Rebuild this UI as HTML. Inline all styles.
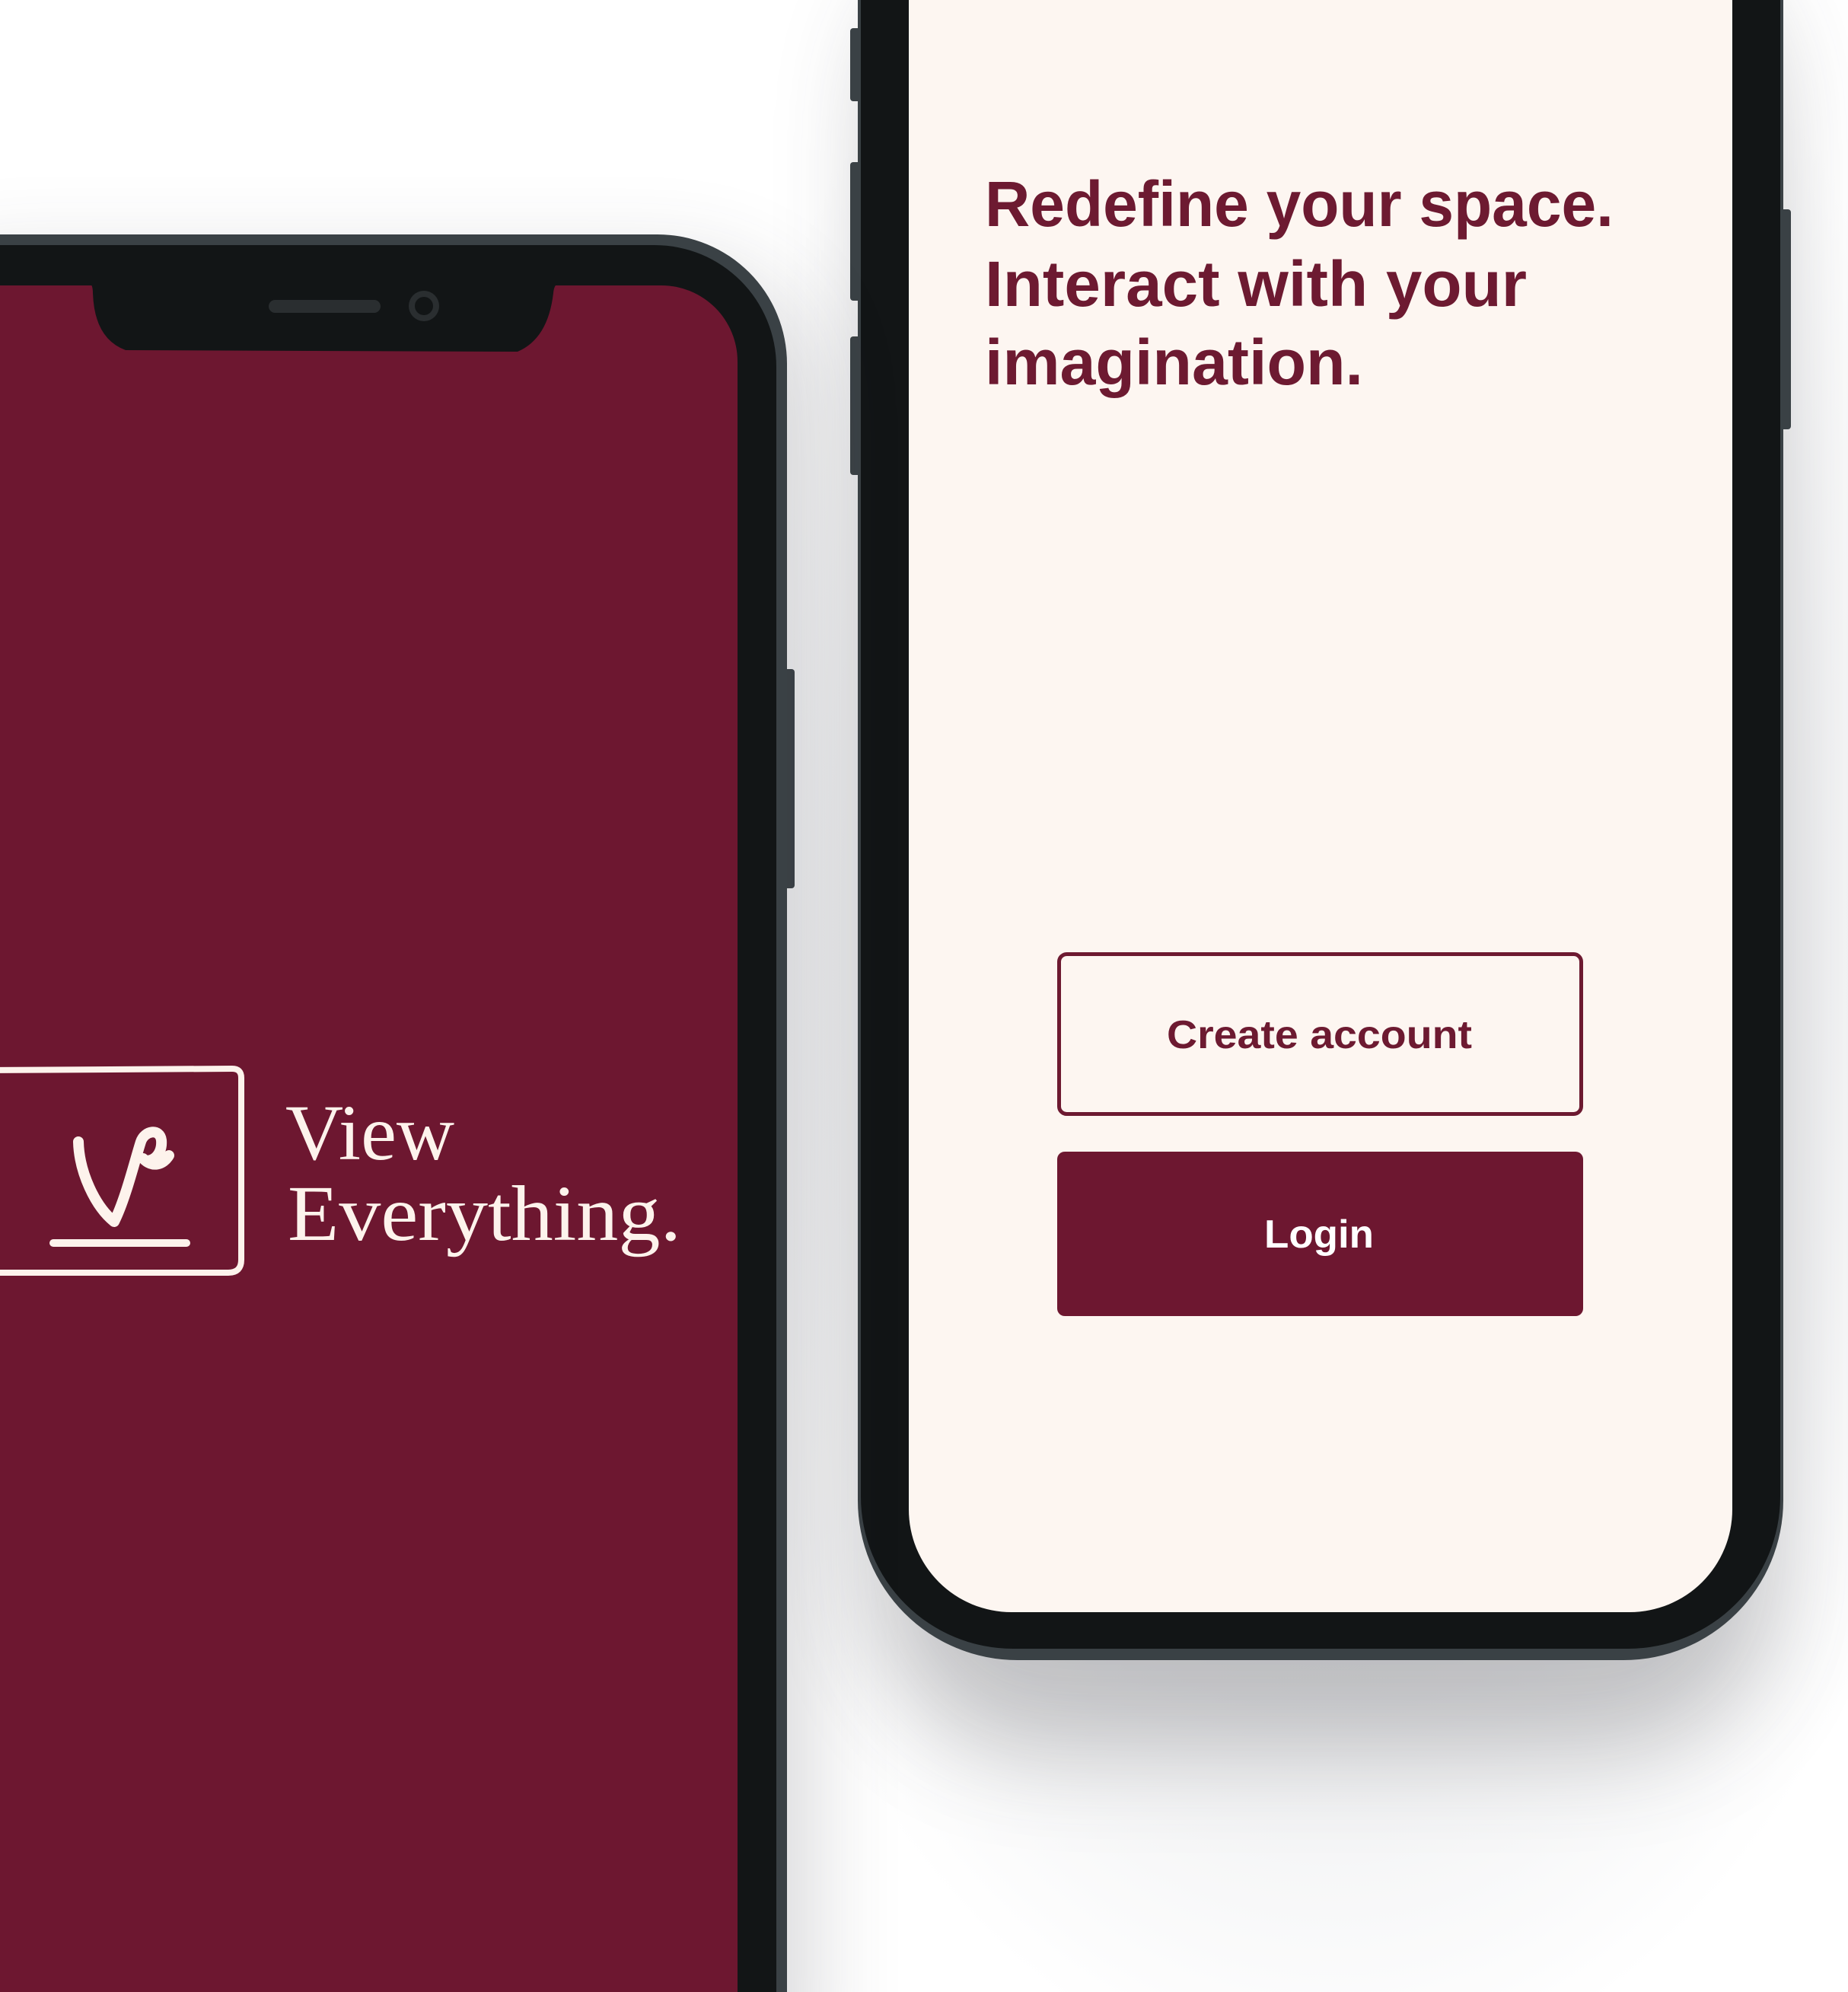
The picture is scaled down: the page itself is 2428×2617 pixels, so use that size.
<!DOCTYPE html>
<html><head><meta charset="utf-8"><style>
html,body{margin:0;padding:0;width:2428px;height:2617px;overflow:hidden;background:#fff;}
#w{position:relative;width:2428px;height:2617px;overflow:hidden;background:radial-gradient(ellipse 900px 1500px at 1750px 1250px,#d6d7da 0%,#e9eaec 50%,#ffffff 100%);}
.abs{position:absolute;}
</style></head><body><div id="w">
<div class="abs" style="left:1150px;top:-200px;width:1180px;height:2380px;border-radius:220px;box-shadow:0 120px 180px rgba(60,62,70,0.28);"></div>
<div class="abs" style="left:1117px;top:37px;width:14px;height:96px;background:#3a4145;border-radius:4px"></div>
<div class="abs" style="left:1117px;top:213px;width:14px;height:182px;background:#3a4145;border-radius:4px"></div>
<div class="abs" style="left:1117px;top:442px;width:14px;height:182px;background:#3a4145;border-radius:4px"></div>
<div class="abs" style="left:2339px;top:275px;width:14px;height:289px;background:#3a4145;border-radius:4px"></div>
<div class="abs" style="left:1127px;top:-300px;width:1216px;height:2481px;background:#3a4145;border-radius:0 0 210px 210px;"></div>
<div class="abs" style="left:1131px;top:-300px;width:1208px;height:2466px;background:#121516;border-radius:0 0 200px 200px;"></div>
<div class="abs" style="left:1194px;top:-300px;width:1082px;height:2418px;background:#fdf6f1;border-radius:0 0 135px 135px;"></div>
<svg class="abs" style="left:0;top:0" width="2428" height="2617">
<g font-family="'Liberation Sans',sans-serif" font-weight="bold" fill="#6d1a31" font-size="84">
<text x="1294" y="297" textLength="826" lengthAdjust="spacingAndGlyphs">Redefine your space.</text>
<text x="1294" y="402" textLength="712" lengthAdjust="spacingAndGlyphs">Interact with your</text>
<text x="1294" y="505" textLength="497" lengthAdjust="spacingAndGlyphs">imagination.</text>
</g>
<rect x="1391.5" y="1253.5" width="686" height="210" rx="10" fill="none" stroke="#6d1a31" stroke-width="5"/>
<rect x="1389" y="1513" width="691" height="216" rx="10" fill="#6d1730"/>
<g font-family="'Liberation Sans',sans-serif" font-weight="bold" font-size="52">
<text x="1533" y="1377" textLength="401" lengthAdjust="spacingAndGlyphs" fill="#6d1a31">Create account</text>
<text x="1661" y="1639" textLength="144" lengthAdjust="spacingAndGlyphs" fill="#fff">Login</text>
</g>
</svg>
<div class="abs" style="left:1030px;top:879px;width:14px;height:288px;background:#3a4145;border-radius:4px"></div>
<div class="abs" style="left:-200px;top:308px;width:1234px;height:2500px;background:#3a4145;border-radius:170px;box-shadow:30px 40px 120px rgba(60,62,70,0.2)"></div>
<div class="abs" style="left:-200px;top:322px;width:1220px;height:2500px;background:#121516;border-radius:160px;"></div>
<div class="abs" style="left:-200px;top:375px;width:1169px;height:2500px;background:#6d1730;border-radius:100px;"></div>
<svg class="abs" style="left:0;top:0" width="1100" height="2617">
<path d="M112 372 L116 372 Q122 372 122 385 Q124 445 165 460 L680 462 Q720 445 727 385 Q728 372 736 372 L745 372 L745 370 L112 370 Z" fill="#121516"/>
<rect x="353" y="394" width="147" height="17" rx="8.5" fill="#2a2e30"/>
<circle cx="557" cy="402" r="20" fill="#2a2e30"/><circle cx="557" cy="402" r="12" fill="#121516"/>
<g fill="none" stroke="#fdf3ec" stroke-linecap="round" stroke-linejoin="round">
<path d="M-20 1406 L305 1404 Q317 1404 317 1416 L317 1655 Q317 1672 300 1672 L-20 1672" stroke-width="8"/>
<path d="M103 1500 C104 1540 125 1585 150 1605 C165 1575 177 1525 185 1500 C190 1485 210 1482 212 1498 C214 1520 195 1530 188 1522 C200 1535 215 1530 222 1518" stroke-width="14"/>
<path d="M70 1633 L245 1633" stroke-width="10"/>
</g>
<g font-family="'Liberation Serif',serif" fill="#fdf3ec" font-size="104">
<text x="375" y="1523" textLength="222" lengthAdjust="spacingAndGlyphs">View</text>
<text x="378" y="1629" textLength="517" lengthAdjust="spacingAndGlyphs">Everything.</text>
</g>
</svg>
</div></body></html>
